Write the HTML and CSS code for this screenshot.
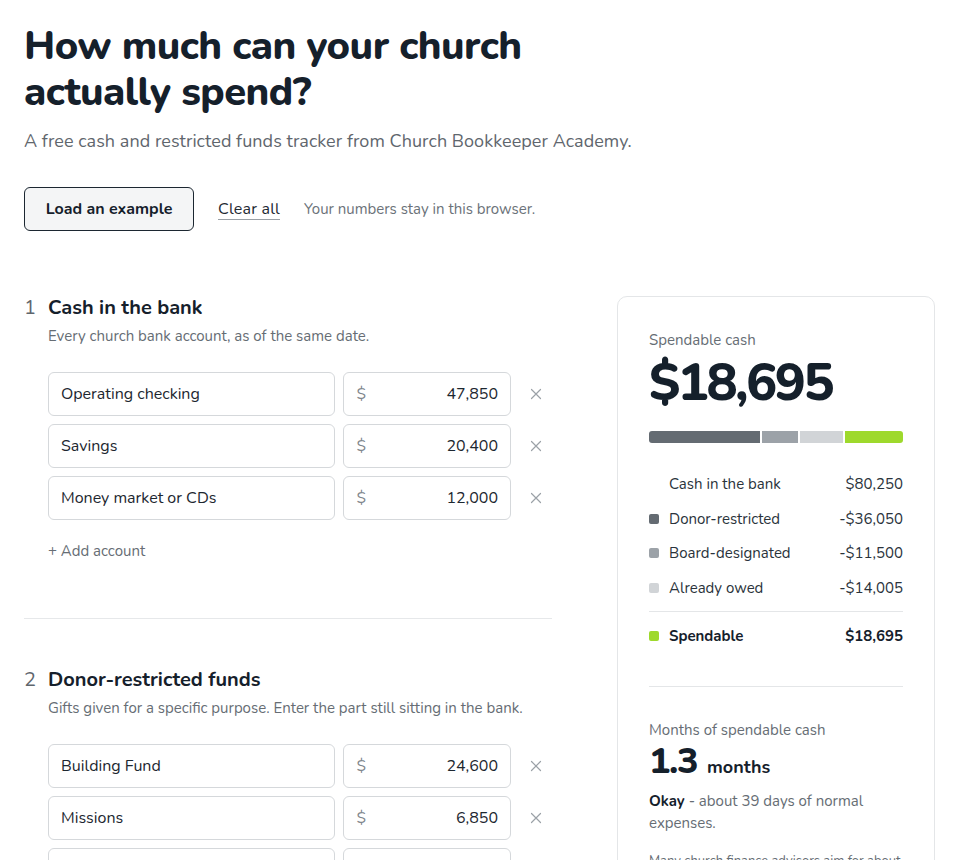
FILE: index.html
```html
<!DOCTYPE html>
<html lang="en">
<head>
<meta charset="utf-8">
<title>Spendable cash tracker</title>
<link rel="stylesheet" href="styles.css">
</head>
<body>
<div class="page">
  <header class="hero">
    <h1 class="title">How much can your church<br>actually spend?</h1>
    <p class="subtitle">A free cash and restricted funds tracker from Church Bookkeeper Academy.</p>
    <div class="actions">
      <button class="btn-primary" type="button">Load an example</button>
      <a class="link-clear" href="#">Clear all</a>
      <span class="note">Your numbers stay in this browser.</span>
    </div>
  </header>

  <main class="layout">
    <div class="forms">
      <section class="step">
        <h2 class="step-title"><span class="step-num">1</span>Cash in the bank</h2>
        <p class="step-desc">Every church bank account, as of the same date.</p>
        <div class="rows">
          <div class="row">
            <div class="field name">Operating checking</div>
            <div class="field amount"><span class="cur">$</span><span class="val">47,850</span></div>
            <span class="remove"><svg viewBox="0 0 12 12" width="12" height="12"><path d="M1.5 1.5 10.5 10.5M10.5 1.5 1.5 10.5" stroke="currentColor" stroke-width="1.2" fill="none" stroke-linecap="round"/></svg></span>
          </div>
          <div class="row">
            <div class="field name">Savings</div>
            <div class="field amount"><span class="cur">$</span><span class="val">20,400</span></div>
            <span class="remove"><svg viewBox="0 0 12 12" width="12" height="12"><path d="M1.5 1.5 10.5 10.5M10.5 1.5 1.5 10.5" stroke="currentColor" stroke-width="1.2" fill="none" stroke-linecap="round"/></svg></span>
          </div>
          <div class="row">
            <div class="field name">Money market or CDs</div>
            <div class="field amount"><span class="cur">$</span><span class="val">12,000</span></div>
            <span class="remove"><svg viewBox="0 0 12 12" width="12" height="12"><path d="M1.5 1.5 10.5 10.5M10.5 1.5 1.5 10.5" stroke="currentColor" stroke-width="1.2" fill="none" stroke-linecap="round"/></svg></span>
          </div>
        </div>
        <a class="add" href="#">+ Add account</a>
      </section>

      <section class="step step-next">
        <h2 class="step-title"><span class="step-num">2</span>Donor-restricted funds</h2>
        <p class="step-desc">Gifts given for a specific purpose. Enter the part still sitting in the bank.</p>
        <div class="rows">
          <div class="row">
            <div class="field name">Building Fund</div>
            <div class="field amount"><span class="cur">$</span><span class="val">24,600</span></div>
            <span class="remove"><svg viewBox="0 0 12 12" width="12" height="12"><path d="M1.5 1.5 10.5 10.5M10.5 1.5 1.5 10.5" stroke="currentColor" stroke-width="1.2" fill="none" stroke-linecap="round"/></svg></span>
          </div>
          <div class="row">
            <div class="field name">Missions</div>
            <div class="field amount"><span class="cur">$</span><span class="val">6,850</span></div>
            <span class="remove"><svg viewBox="0 0 12 12" width="12" height="12"><path d="M1.5 1.5 10.5 10.5M10.5 1.5 1.5 10.5" stroke="currentColor" stroke-width="1.2" fill="none" stroke-linecap="round"/></svg></span>
          </div>
          <div class="row">
            <div class="field name">Youth ministry</div>
            <div class="field amount"><span class="cur">$</span><span class="val">4,600</span></div>
            <span class="remove"><svg viewBox="0 0 12 12" width="12" height="12"><path d="M1.5 1.5 10.5 10.5M10.5 1.5 1.5 10.5" stroke="currentColor" stroke-width="1.2" fill="none" stroke-linecap="round"/></svg></span>
          </div>
        </div>
      </section>
    </div>

    <aside class="summary">
      <div class="sum-label">Spendable cash</div>
      <div class="sum-big">$18,695</div>
      <div class="bar">
        <span class="seg seg-donor" style="flex-grow:36050"></span>
        <span class="seg seg-board" style="flex-grow:11500"></span>
        <span class="seg seg-owed" style="flex-grow:14005"></span>
        <span class="seg seg-spend" style="flex-grow:18695"></span>
      </div>
      <ul class="breakdown">
        <li class="brow"><span class="dot dot-none"></span><span class="blabel">Cash in the bank</span><span class="bval">$80,250</span></li>
        <li class="brow"><span class="dot dot-donor"></span><span class="blabel">Donor-restricted</span><span class="bval">-$36,050</span></li>
        <li class="brow"><span class="dot dot-board"></span><span class="blabel">Board-designated</span><span class="bval">-$11,500</span></li>
        <li class="brow"><span class="dot dot-owed"></span><span class="blabel">Already owed</span><span class="bval">-$14,005</span></li>
        <li class="brow brow-total"><span class="dot dot-spend"></span><span class="blabel">Spendable</span><span class="bval">$18,695</span></li>
      </ul>
      <div class="months">
        <div class="sum-label">Months of spendable cash</div>
        <div class="months-big"><span class="months-num">1.3</span><span class="months-unit">months</span></div>
        <p class="months-text"><strong>Okay</strong> - about 39 days of normal expenses.</p>
        <p class="months-note">Many church finance advisors aim for about three months of spendable cash.</p>
      </div>
    </aside>
  </main>
</div>
</body>
</html>
```

FILE: styles.css
```css
* { box-sizing: border-box; }
html, body { margin: 0; padding: 0; background: #ffffff; }
body {
  font-family: "Nunito", "Nunito Sans", Lato, "Noto Sans", sans-serif;
  color: #16202a;
}
.page { padding: 23px 25px 40px 24px; }

.title {
  margin: 0;
  font-size: 40px;
  line-height: 46px;
  font-weight: 800;
  letter-spacing: -0.55px;
  color: #15202b;
}
.subtitle {
  margin: 13px 0 0;
  font-size: 18px;
  line-height: 26px;
  letter-spacing: 0.05px;
  color: #5f666d;
}
.actions {
  margin-top: 33px;
  display: flex;
  align-items: center;
}
.btn-primary {
  font-family: inherit;
  font-size: 16px;
  font-weight: 700;
  color: #15202b;
  background: #f4f5f6;
  border: 1px solid #1c2731;
  border-radius: 6px;
  height: 44px;
  width: 170px;
  padding: 0;
}
.link-clear {
  margin-left: 24px;
  font-size: 16px;
  letter-spacing: 0.2px;
  color: #1f2a33;
  text-decoration: none;
  border-bottom: 1px solid #9aa0a6;
  line-height: 20px;
}
.note {
  margin-left: 24px;
  font-size: 15px;
  color: #6b7279;
}

.layout {
  margin-top: 64px;
  display: grid;
  grid-template-columns: 528px 318px;
  column-gap: 65px;
  align-items: start;
}

.step { padding-bottom: 56px; border-bottom: 1px solid #e6e8ea; }
.step-next { padding-top: 48px; border-bottom: none; }
.step-title {
  margin: 0;
  font-size: 20px;
  line-height: 26px;
  font-weight: 700;
  color: #15202b;
  display: flex;
}
.step-num {
  width: 24px;
  font-weight: 400;
  color: #5f666d;
}
.step-desc {
  margin: 4px 0 0 24px;
  font-size: 15px;
  line-height: 22px;
  color: #666d74;
}
.rows {
  margin: 25px 0 0 24px;
  display: flex;
  flex-direction: column;
  gap: 8px;
}
.row {
  display: flex;
  align-items: center;
  gap: 8px;
}
.field {
  height: 44px;
  border: 1px solid #d5d8db;
  border-radius: 6px;
  background: #fff;
  display: flex;
  align-items: center;
  font-size: 16px;
  color: #1d2730;
}
.name { width: 288px; padding: 0 12px; }
.amount { width: 168px; padding: 0 12px; justify-content: space-between; }
.cur { color: #80868c; }
.val { color: #1d2730; }
.remove {
  width: 32px;
  display: flex;
  justify-content: center;
  color: #9ba1a7;
  margin-left: 1px;
}
.add {
  display: block;
  margin: 20px 0 0 24px;
  font-size: 15px;
  line-height: 22px;
  color: #666d74;
  text-decoration: none;
}

.summary {
  margin-top: 1px;
  border: 1px solid #e4e6e8;
  border-radius: 10px;
  padding: 32px 31px 40px;
}
.sum-label {
  font-size: 15px;
  line-height: 22px;
  color: #666d74;
}
.sum-big {
  margin-top: 3px;
  font-size: 52px;
  line-height: 58px;
  font-weight: 800;
  letter-spacing: -2.5px;
  color: #15202b;
}
.bar {
  margin-top: 19px;
  display: flex;
  gap: 2px;
  height: 12px;
}
.seg { flex-basis: 0; height: 12px; }
.seg-donor { background: #646b72; border-radius: 3px 0 0 3px; }
.seg-board { background: #9ca2a8; }
.seg-owed { background: #d1d4d7; }
.seg-spend { background: #9ed92c; border-radius: 0 3px 3px 0; }

.breakdown {
  list-style: none;
  margin: 24px 0 0;
  padding: 0;
}
.brow {
  display: flex;
  align-items: center;
  padding: 6px 0;
  font-size: 15px;
  line-height: 22.5px;
  color: #2a333b;
}
.brow-total {
  margin-top: 6px;
  padding-top: 13px;
  border-top: 1px solid #e4e6e8;
  font-weight: 700;
  color: #15202b;
}
.dot {
  width: 10px;
  height: 10px;
  border-radius: 2px;
  margin-right: 10px;
  flex-shrink: 0;
}
.dot-none { background: transparent; }
.dot-donor { background: #646b72; }
.dot-board { background: #9ca2a8; }
.dot-owed { background: #d1d4d7; }
.dot-spend { background: #9ed92c; }
.blabel { flex: 1; }
.bval { text-align: right; }

.months {
  margin-top: 32px;
  padding-top: 32px;
  border-top: 1px solid #e4e6e8;
}
.months-big {
  margin-top: 0;
  display: flex;
  align-items: baseline;
  gap: 10px;
  line-height: 42px;
}
.months-num {
  font-size: 36px;
  font-weight: 800;
  color: #15202b;
  letter-spacing: -1.5px;
}
.months-unit {
  font-size: 18px;
  font-weight: 700;
  color: #15202b;
}
.months-text {
  margin: 2px 0 0;
  font-size: 15px;
  line-height: 22.5px;
  color: #666d74;
}
.months-text strong { color: #15202b; font-weight: 700; }
.months-note {
  margin: 16px 0 0;
  font-size: 13px;
  line-height: 20px;
  color: #666d74;
}
```
